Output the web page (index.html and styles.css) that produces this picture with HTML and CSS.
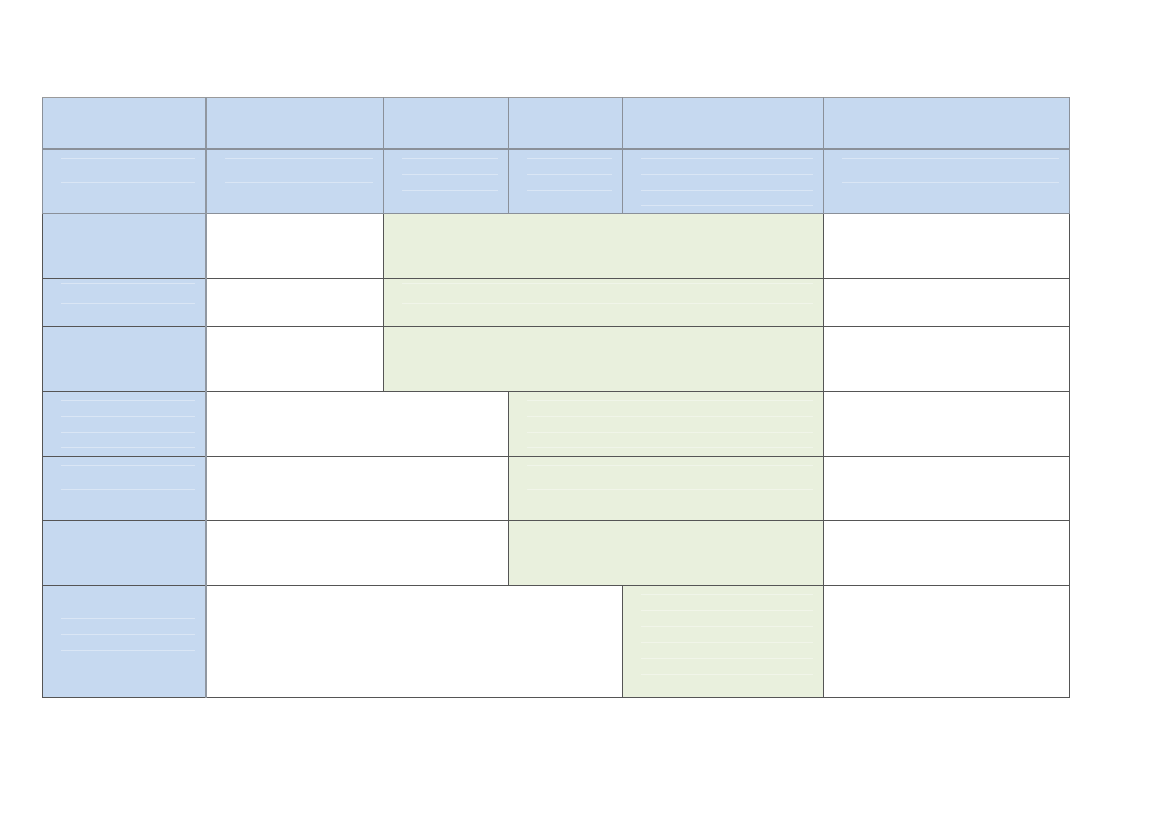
FILE: index.html
```html
<!DOCTYPE html>
<html lang="en">

<head>
  <meta charset="UTF-8">
  <meta name="viewport" content="width=device-width, initial-scale=1.0">
  <title>Table</title>
  <link rel="stylesheet" href="styles.css">
</head>

<body>
  <div class="page">
    <table class="sheet">
      <colgroup>
        <col class="c1">
        <col class="c2">
        <col class="c3">
        <col class="c4">
        <col class="c5">
        <col class="c6">
      </colgroup>
      <tr class="r-head1">
        <td class="blue"></td>
        <td class="blue"></td>
        <td class="blue"></td>
        <td class="blue"></td>
        <td class="blue"></td>
        <td class="blue"></td>
      </tr>
      <tr class="r-head2">
        <td class="blue"><div class="guides two"></div></td>
        <td class="blue"><div class="guides two"></div></td>
        <td class="blue"><div class="guides three"></div></td>
        <td class="blue"><div class="guides three"></div></td>
        <td class="blue"><div class="guides four"></div></td>
        <td class="blue"><div class="guides two"></div></td>
      </tr>
      <tr class="r-tall">
        <td class="blue"></td>
        <td></td>
        <td class="green" colspan="3"></td>
        <td></td>
      </tr>
      <tr class="r-short">
        <td class="blue"><div class="guides two small"></div></td>
        <td></td>
        <td class="green" colspan="3"><div class="guides two small"></div></td>
        <td></td>
      </tr>
      <tr class="r-tall">
        <td class="blue"></td>
        <td></td>
        <td class="green" colspan="3"></td>
        <td></td>
      </tr>
      <tr class="r-tall">
        <td class="blue"><div class="guides four"></div></td>
        <td colspan="2"></td>
        <td class="green" colspan="2"><div class="guides four"></div></td>
        <td></td>
      </tr>
      <tr class="r-tall r-tight">
        <td class="blue"><div class="guides two"></div></td>
        <td colspan="2"></td>
        <td class="green" colspan="2"><div class="guides two"></div></td>
        <td></td>
      </tr>
      <tr class="r-tall">
        <td class="blue"></td>
        <td colspan="2"></td>
        <td class="green" colspan="2"></td>
        <td></td>
      </tr>
      <tr class="r-last">
        <td class="blue"><div class="guides three"></div></td>
        <td colspan="3"></td>
        <td class="green"><div class="guides six"></div></td>
        <td></td>
      </tr>
    </table>
  </div>
</body>

</html>
```

FILE: styles.css
```css
body {
  margin: 0;
  background: #fff;
  font-family: "Liberation Sans", Arial, sans-serif;
}

.page {
  padding: 97px 0 0 42px;
}

.sheet {
  border-collapse: collapse;
  table-layout: fixed;
  width: 1028px;
  border-left: 1px solid #000;
}

.sheet .c1 { width: 163px; }
.sheet .c2 { width: 178px; }
.sheet .c3 { width: 125px; }
.sheet .c4 { width: 114px; }
.sheet .c5 { width: 201px; }
.sheet .c6 { width: 246px; }

.sheet td {
  border: 1px solid #555;
  padding: 0;
  vertical-align: middle;
  background: #fff;
}

.sheet td.blue {
  background: #c6d9f0;
}

.sheet td.green {
  background: #e9f0dd;
}

.sheet td:first-child {
  border-right: 2px solid #9097a0;
}

.r-head1 td,
.r-head2 td {
  border-color: #8a9099;
}

.r-head1 td {
  height: 50px;
  border-top-color: #9a9a9a;
  border-bottom-width: 2px;
}

.r-head2 td { height: 63px; }
.r-tall td { height: 64px; }
.r-tall.r-tight td { height: 63px; }
.r-short td { height: 47px; }
.r-last td { height: 111px; }

/* faint empty-line guides left inside the cells */
.guides {
  box-sizing: border-box;
  margin: 0 10px 0 18px;
  height: 48px;
  border-top: 1px solid rgba(255, 255, 255, 0.35);
  --guide: linear-gradient(rgba(255, 255, 255, 0.35), rgba(255, 255, 255, 0.35));
}

.guides.two {
  background: var(--guide) 0 23px / 100% 1px no-repeat;
}

.guides.two.small {
  height: 40px;
  background-position: 0 19px;
}

.guides.three {
  background: var(--guide) 0 15px / 100% 1px no-repeat, var(--guide) 0 31px / 100% 1px no-repeat;
}

.guides.four {
  border-bottom: 1px solid rgba(255, 255, 255, 0.35);
  background: var(--guide) 0 15px / 100% 1px no-repeat, var(--guide) 0 31px / 100% 1px no-repeat;
}

.guides.six {
  height: 96px;
  background: repeating-linear-gradient(transparent 0 15px, rgba(255, 255, 255, 0.35) 15px 16px);
}
```
